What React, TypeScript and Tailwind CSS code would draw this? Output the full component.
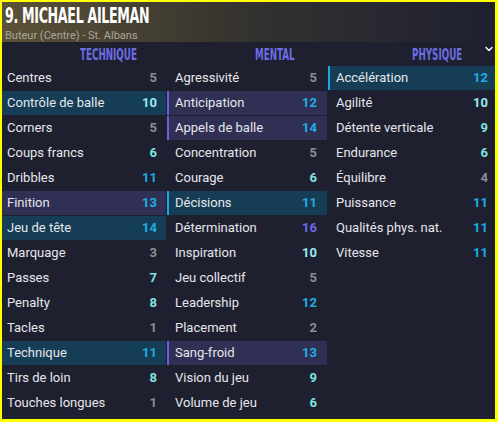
import { ChevronDown } from 'lucide-react';

type Attr = { name: string; value: number; hl?: 'cyan' | 'purple' };

const technique: Attr[] = [
  { name: 'Centres', value: 5 },
  { name: 'Contrôle de balle', value: 10, hl: 'cyan' },
  { name: 'Corners', value: 5 },
  { name: 'Coups francs', value: 6 },
  { name: 'Dribbles', value: 11 },
  { name: 'Finition', value: 13, hl: 'purple' },
  { name: 'Jeu de tête', value: 14, hl: 'cyan' },
  { name: 'Marquage', value: 3 },
  { name: 'Passes', value: 7 },
  { name: 'Penalty', value: 8 },
  { name: 'Tacles', value: 1 },
  { name: 'Technique', value: 11, hl: 'cyan' },
  { name: 'Tirs de loin', value: 8 },
  { name: 'Touches longues', value: 1 },
];

const mental: Attr[] = [
  { name: 'Agressivité', value: 5 },
  { name: 'Anticipation', value: 12, hl: 'purple' },
  { name: 'Appels de balle', value: 14, hl: 'purple' },
  { name: 'Concentration', value: 5 },
  { name: 'Courage', value: 6 },
  { name: 'Décisions', value: 11, hl: 'cyan' },
  { name: 'Détermination', value: 16 },
  { name: 'Inspiration', value: 10 },
  { name: 'Jeu collectif', value: 5 },
  { name: 'Leadership', value: 12 },
  { name: 'Placement', value: 2 },
  { name: 'Sang-froid', value: 13, hl: 'purple' },
  { name: 'Vision du jeu', value: 9 },
  { name: 'Volume de jeu', value: 6 },
];

const physique: Attr[] = [
  { name: 'Accélération', value: 12, hl: 'cyan' },
  { name: 'Agilité', value: 10 },
  { name: 'Détente verticale', value: 9 },
  { name: 'Endurance', value: 6 },
  { name: 'Équilibre', value: 4 },
  { name: 'Puissance', value: 11 },
  { name: 'Qualités phys. nat.', value: 11 },
  { name: 'Vitesse', value: 11 },
];

function valueColor(v: number) {
  if (v >= 16) return 'text-[#6c68e6]';
  if (v >= 11) return 'text-[#1eaee6]';
  if (v === 10) return 'text-[#9ce9f0]';
  if (v >= 6) return 'text-[#7fe2e0]';
  return 'text-[#8c8e9a]';
}

function Row({ a, bar, pl, pr }: { a: Attr; bar: boolean; pl: string; pr: string }) {
  const bg = a.hl === 'cyan' ? 'bg-[#163d56]' : a.hl === 'purple' ? 'bg-[#2f3054]' : '';
  const border = !bar
    ? ''
    : a.hl === 'cyan'
      ? 'border-l-2 border-[#1aa8e2]'
      : a.hl === 'purple'
        ? 'border-l-2 border-[#6b5fe2]'
        : 'border-l-2 border-transparent';
  return (
    <div className={`flex h-6 items-center justify-between ${bg} ${border} ${pl} ${pr}`}>
      <span className="text-[13px] text-[#e6e6ea]">{a.name}</span>
      <span className={`text-[13px] font-bold ${valueColor(a.value)}`}>{a.value}</span>
    </div>
  );
}

function Column({ items, bar, pl, pr }: { items: Attr[]; bar: boolean; pl: string; pr: string }) {
  return (
    <div className="flex flex-col gap-px">
      {items.map((a) => (
        <Row key={a.name} a={a} bar={bar} pl={pl} pr={pr} />
      ))}
    </div>
  );
}

export default function App() {
  return (
    <div
      className="w-[498px] h-[422px] overflow-hidden border-l-2 border-t-2 border-r-[3px] border-b-[3px] border-[#ffff00] bg-[#1e2030]"
      style={{ fontFamily: 'Roboto, "Noto Sans", sans-serif' }}
    >
      <div className="h-10 bg-gradient-to-r from-[#5c5236] via-[#34322f] to-[#1e2030] pl-[3px] pt-[3px]">
        <div
          className="text-[21px] leading-[22px] font-bold text-white tracking-[-0.5px]"
          style={{ fontFamily: '"DejaVu Sans", sans-serif', fontStretch: 'condensed' }}
        >
          <span className="inline-block origin-left scale-x-[0.67]">9. MICHAEL AILEMAN</span>
        </div>
        <div className="mt-[3px] text-[11px] leading-3 text-[#aaa69c]">Buteur (Centre) - St. Albans</div>
      </div>

      <div
        className="relative grid h-6 grid-cols-[164px_160px_1fr] gap-x-px items-center pt-[2px] text-[15px] font-bold text-[#6b6de2]"
        style={{ fontFamily: '"DejaVu Sans", sans-serif', fontStretch: 'condensed' }}
      >
        <span className="pl-[78px]"><span className="inline-block origin-left scale-x-[0.65]">TECHNIQUE</span></span>
        <span className="pl-[88px]"><span className="inline-block origin-left scale-x-[0.65]">MENTAL</span></span>
        <span className="pl-[84px]"><span className="inline-block origin-left scale-x-[0.65]">PHYSIQUE</span></span>
        <ChevronDown className="absolute right-0 top-[1px] text-white" size={12} strokeWidth={3} />
      </div>

      <div className="grid grid-cols-[164px_160px_1fr] gap-x-px">
        <Column items={technique} bar={false} pl="pl-[5px]" pr="pr-[9px]" />
        <Column items={mental} bar={true} pl="pl-[6px]" pr="pr-[10px]" />
        <Column items={physique} bar={true} pl="pl-[6px]" pr="pr-[7px]" />
      </div>
    </div>
  );
}
